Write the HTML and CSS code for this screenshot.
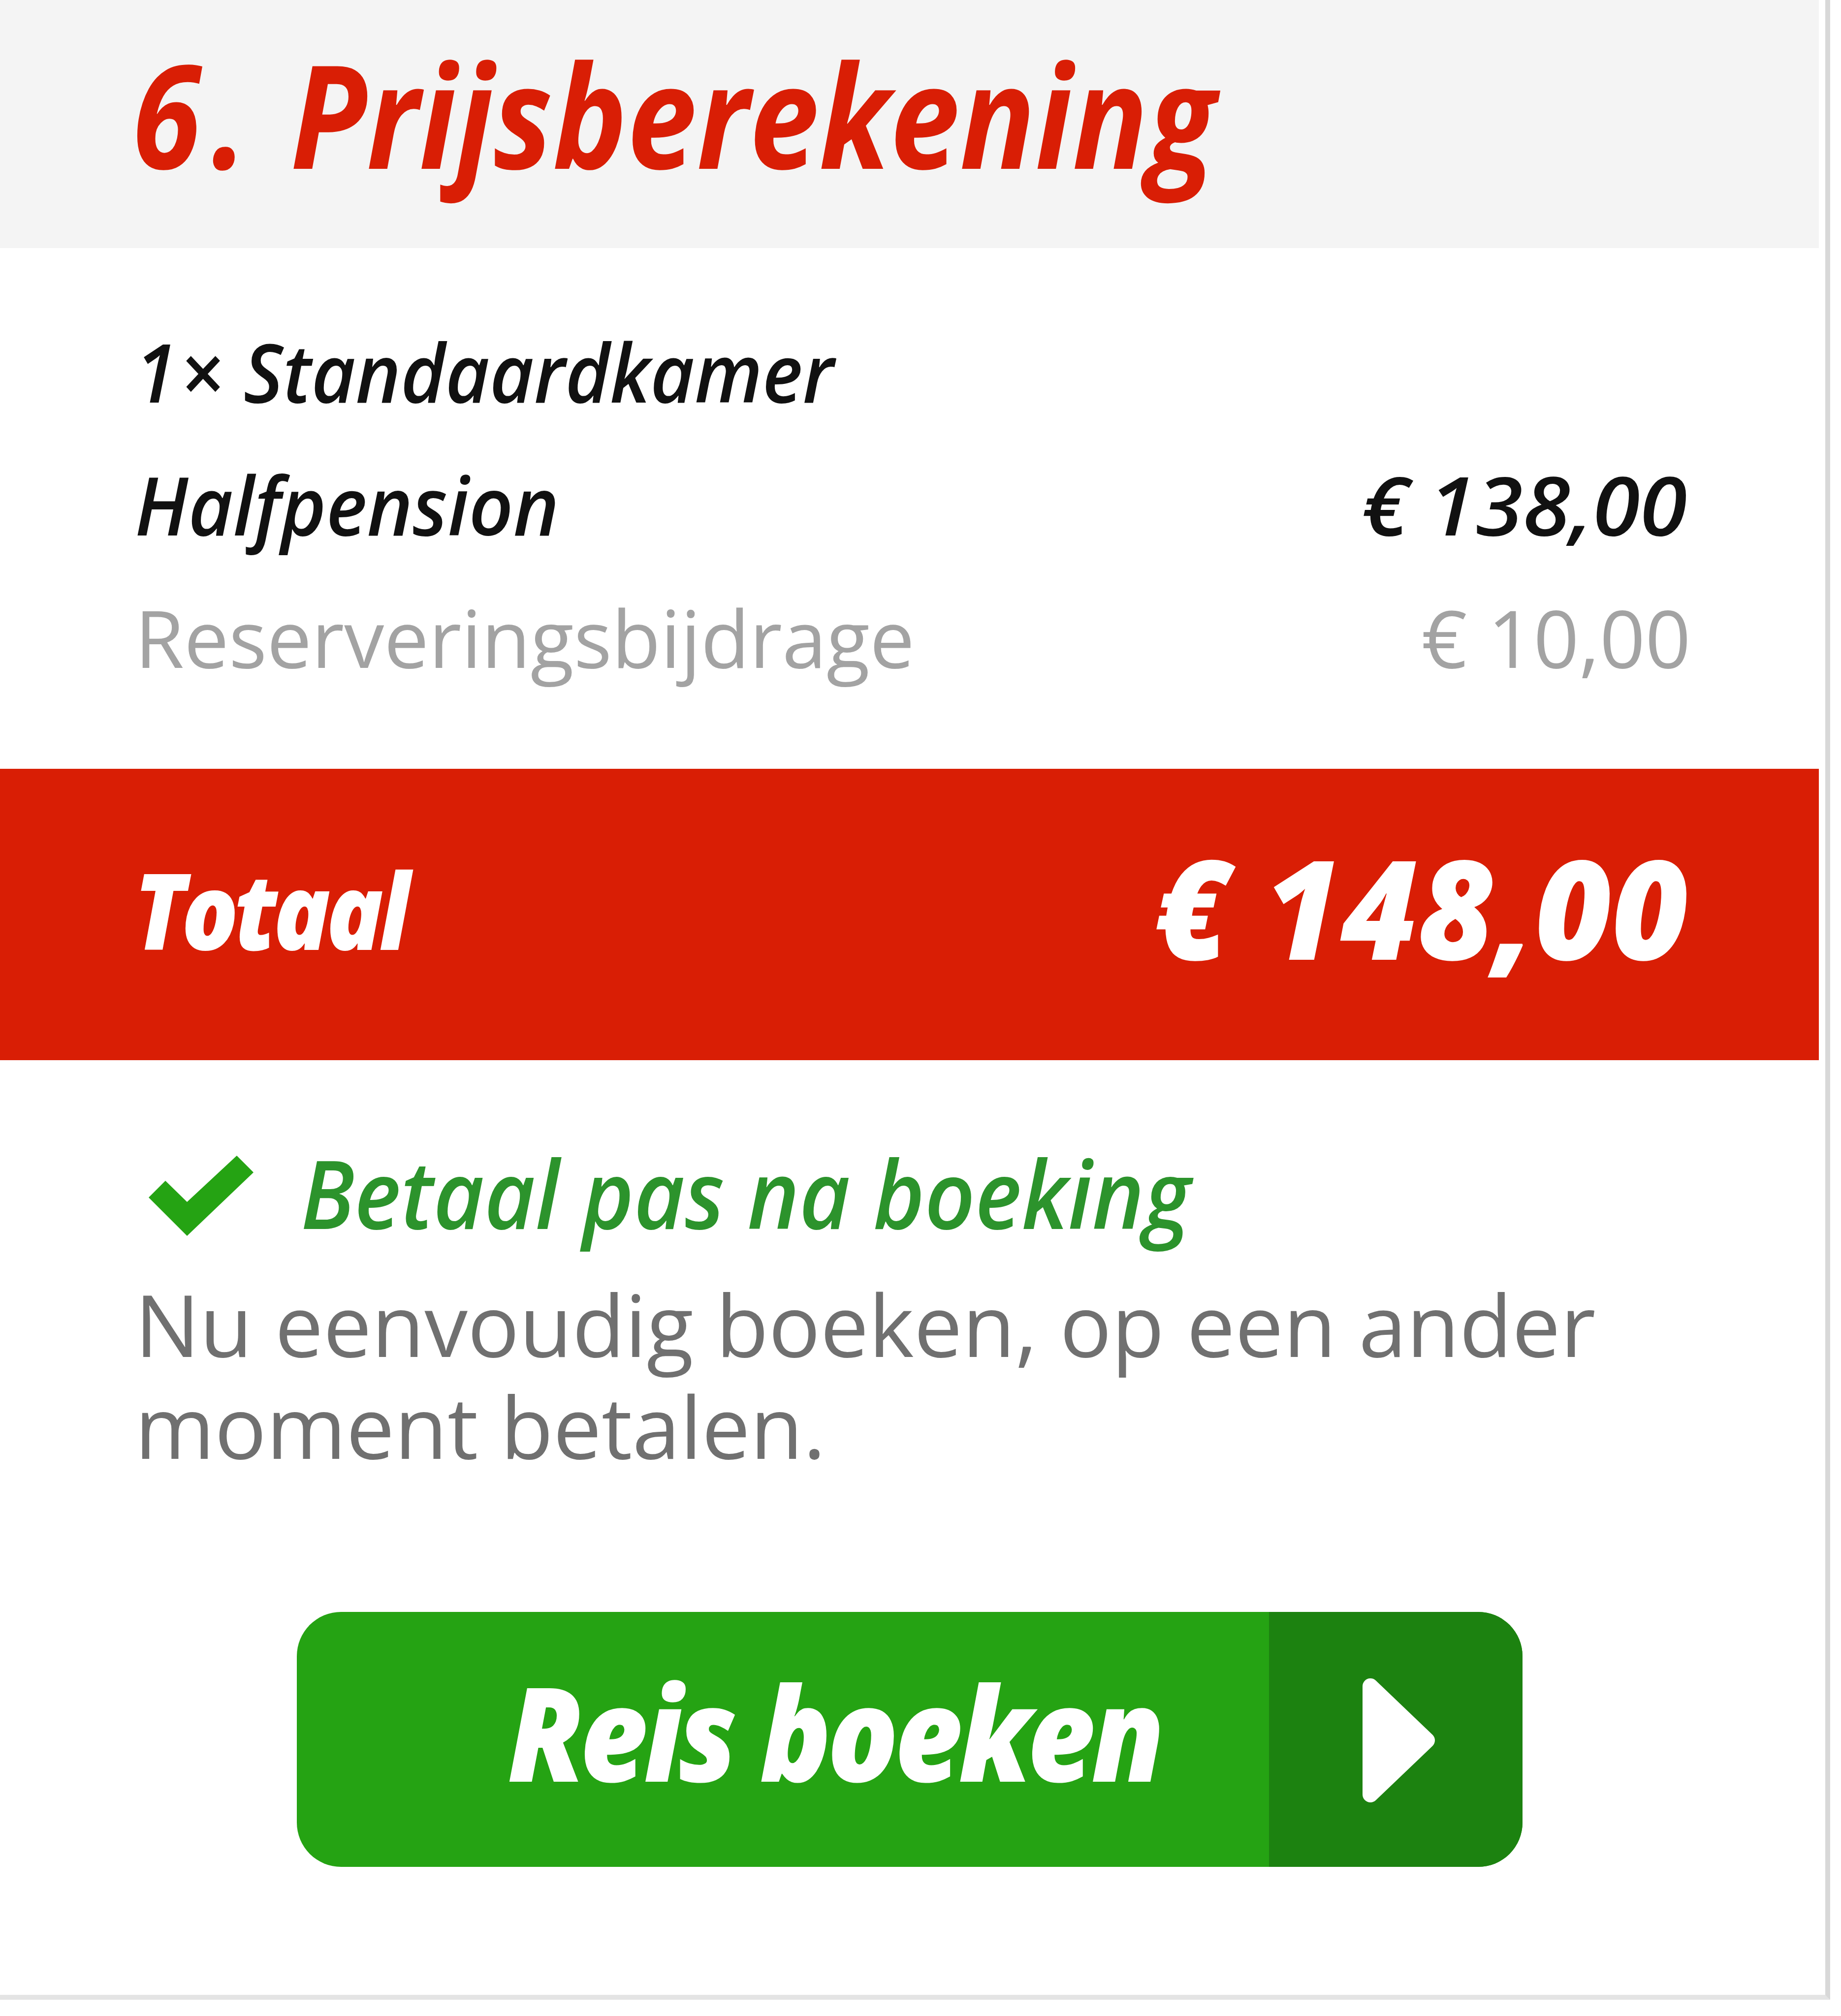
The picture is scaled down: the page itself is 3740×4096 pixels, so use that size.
FILE: index.html
```
<!DOCTYPE html>
<html lang="nl">

<head>
    <meta charset="UTF-8">
    <meta name="viewport" content="width=device-width, initial-scale=1.0">
    <title>Prijsberekening</title>
    <link rel="stylesheet" href="styles.css">
</head>

<body>
    <div class="price-card">
        <div class="card-header">
            <h2><span class="step">6.</span> Prijsberekening</h2>
        </div>

        <div class="price-list">
            <div class="price-row">
                <span class="room">1 <span class="times">×</span> Standaardkamer</span>
            </div>
            <div class="price-row">
                <span class="board">Halfpension</span>
                <span class="amount">€ 138,00</span>
            </div>
            <div class="price-row fee">
                <span>Reserveringsbijdrage</span>
                <span>€ 10,00</span>
            </div>
        </div>

        <div class="total">
            <span class="total-label">Totaal</span>
            <span class="total-amount">€ 148,00</span>
        </div>

        <div class="pay-later">
            <h3>
                <svg class="check" viewBox="0 0 213 163">
                    <path d="M0 85 L34 51 L78 94 L179 0 L213 34 L78 163 Z"/>
                </svg>
                <span class="pay-title">Betaal pas na boeking</span>
            </h3>
            <p>Nu eenvoudig boeken, op een ander<br>moment betalen.</p>
        </div>

        <button class="book" type="button">
            <span class="book-text">
                <span class="book-label">Reis boeken</span>
            </span>
            <span class="book-arrow">
                <svg viewBox="0 0 147 252">
                    <path d="M16 16 V236 L131 126 Z"/>
                </svg>
            </span>
        </button>
    </div>
</body>

</html>
```
FILE: styles.css
```
* {
    box-sizing: border-box;
}

body {
    margin: 0;
    background-color: white;
    font-family: "Open Sans", sans-serif;
}

.price-card {
    width: 3718px;
    height: 4063px;
    padding-right: 13px;
    border-right: 10px solid #d8d8d8;
    border-bottom: 10px solid #e4e4e4;
}

.card-header {
    height: 504px;
    padding-left: 268px;
    background-color: #f4f4f4;
}

.card-header h2 {
    display: inline-block;
    margin: 0;
    color: #d91e05;
    font-size: 292px;
    font-style: italic;
    font-weight: 700;
    line-height: 460px;
    white-space: nowrap;
    transform: scaleX(0.87);
    transform-origin: left;
}

.step {
    letter-spacing: 25px;
}

.price-list {
    padding: 115px 260px 133px 274px;
}

.price-row {
    display: flex;
    justify-content: space-between;
    color: #111;
    font-size: 165px;
    font-style: italic;
    font-weight: 600;
    line-height: 270px;
    white-space: nowrap;
}

.room {
    word-spacing: -18px;
    transform: scaleX(0.94);
    transform-origin: left;
}

.times {
    margin: 0 18px 0 -18px;
}

.board {
    transform: scaleX(0.952);
    transform-origin: left;
}

.amount {
    margin-right: 8px;
    word-spacing: -4px;
    transform: scaleX(1.053);
    transform-origin: right;
}

.price-row.fee {
    color: #a3a3a3;
    font-size: 162px;
    font-style: normal;
    font-weight: 400;
}

.total {
    display: flex;
    justify-content: space-between;
    height: 592px;
    padding: 0 265px 0 272px;
    background-color: #d91e05;
    color: white;
    font-style: italic;
    font-weight: 800;
    white-space: nowrap;
}

.total-label {
    font-size: 214px;
    letter-spacing: -9px;
    line-height: 570px;
    transform: scaleX(0.89);
    transform-origin: left;
}

.total-amount {
    font-size: 280px;
    line-height: 560px;
    transform: scaleX(0.96);
    transform-origin: right;
}

.pay-later {
    padding: 106px 265px 0 274px;
    white-space: nowrap;
}

.pay-later h3 {
    display: flex;
    align-items: center;
    gap: 96px;
    margin: 0;
    padding-left: 28px;
    color: #2c932c;
    font-size: 192px;
    font-style: italic;
    font-weight: 600;
    line-height: 326px;
}

.pay-title {
    transform: scaleX(0.93);
    transform-origin: left;
}

.check {
    width: 213px;
    height: 163px;
    margin-top: 12px;
    fill: #25a313;
}

.pay-later p {
    margin: 0;
    color: #707070;
    font-size: 175px;
    line-height: 207px;
}

.book {
    display: flex;
    width: 2490px;
    height: 518px;
    margin: 275px 0 0 603px;
    padding: 0;
    overflow: hidden;
    border: 0;
    border-radius: 90px;
    background-color: #25a313;
    color: white;
    font-family: inherit;
}

.book-text {
    width: 1975px;
    padding-left: 428px;
    text-align: left;
}

.book-label {
    display: inline-block;
    font-size: 266px;
    font-style: italic;
    font-weight: 800;
    letter-spacing: -9px;
    line-height: 484px;
    white-space: nowrap;
    transform: scaleX(0.898);
    transform-origin: left;
}

.book-arrow {
    display: flex;
    flex: 1;
    align-items: center;
    align-self: stretch;
    padding-left: 190px;
    background-color: #1c8210;
}

.book-arrow svg {
    width: 147px;
    height: 256px;
    margin-top: 4px;
    fill: white;
    stroke: white;
    stroke-width: 32;
    stroke-linejoin: round;
}
```
